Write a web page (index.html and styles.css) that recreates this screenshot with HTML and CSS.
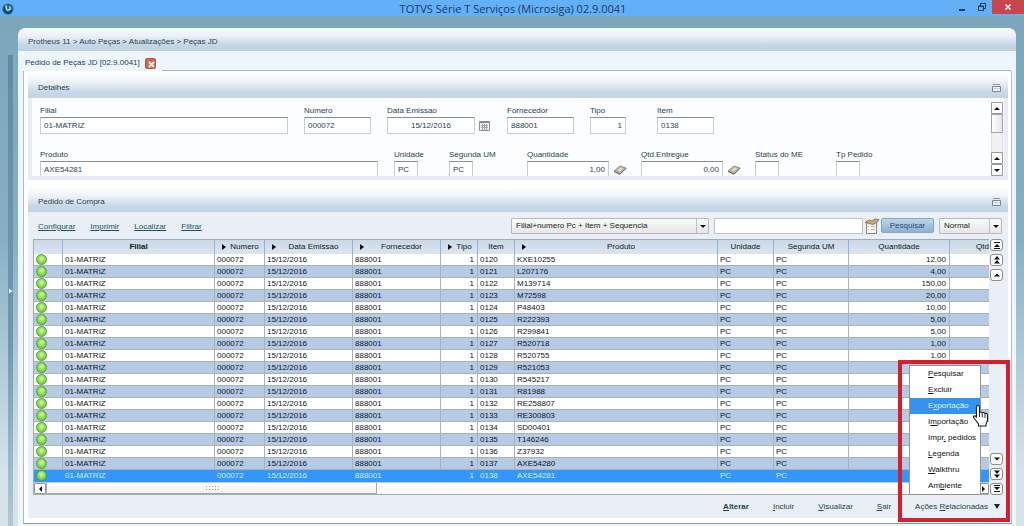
FILE: index.html
```html
<!DOCTYPE html>
<html lang="pt-BR">
<head>
<meta charset="utf-8">
<title>TOTVS Série T Serviços (Microsiga) 02.9.0041</title>
<link rel="stylesheet" href="styles.css">
</head>
<body>
<header class="titlebar">
  <svg class="app-logo" viewBox="0 0 12 12" aria-hidden="true"><circle cx="6" cy="6" r="5.6" fill="#1d6a96"/><path d="M3 3.500A4 4 0 0 0 6 10a4 4 0 0 0 3.500-3" fill="none" stroke="#0c3d5e" stroke-width="1.500"/><path d="M4 2.500 4.500 6a2 2 0 1 0 3-2.500" fill="none" stroke="#c8ecfa" stroke-width="1.300"/></svg>
  <h1 class="window-title">TOTVS Série T Serviços (Microsiga) 02.9.0041</h1>
  <div class="window-buttons">
    <button class="win-btn" aria-label="Minimizar"><svg viewBox="0 0 10 10" width="10" height="10"><path d="M2 7h6v2H2z" fill="#14395c"/></svg></button>
    <button class="win-btn" aria-label="Restaurar"><svg viewBox="0 0 10 10" width="10" height="10" fill="none" stroke="#14395c"><path d="M1.500 4h5v4.500h-5zM3.500 4V1.500h5v5h-2M1.500 4.500h5"/></svg></button>
    <button class="win-btn win-close" aria-label="Fechar"><svg viewBox="0 0 10 10" width="10" height="10"><path d="m2.500 2.500 5 5m0-5-5 5" stroke="#fff" stroke-width="1.500"/></svg></button>
  </div>
</header>
<div class="shell">
  <aside class="rail"><button class="rail-handle" aria-label="Expandir menu"><svg viewBox="0 0 4 8" width="4" height="8"><path d="M0 1.500 3.500 4 0 6.500z" fill="#fff"/></svg></button></aside>
  <main class="panel">
    <nav class="crumbs">Protheus 11 &gt; Auto Peças &gt; Atualizações &gt; Peças JD</nav>
    <div class="tabs"><span class="tab">Pedido de Peças JD [02.9.0041]
      <button class="tab-close" aria-label="Fechar aba"><svg viewBox="0 0 11 11" width="11" height="11"><path d="m3 3 5 5m0-5-5 5" stroke="#fff" stroke-width="1.800"/></svg></button></span><span class="tab-line"></span></div>
    <div class="page">
      <section class="box details">
        <div class="box-head"><h2>Detalhes</h2><svg class="fold" viewBox="0 0 9 8"><path d="M.5 2.500h8v5h-8z" fill="#eef2f6" stroke="#7b8794"/><path d="M1 .5h7" stroke="#8b96a3"/><path d="M1 4.500h7" stroke="#c9d1d9"/></svg></div>
        <div class="form-body">
          <form class="fields">
            <div class="row row-a">
              <div class="field"><label for="f1">Filial</label><input id="f1" class="w-branch" value="01-MATRIZ"></div>
              <div class="field"><label for="f2">Numero</label><input id="f2" class="w-code" value="000072"></div>
              <div class="field"><label for="f3">Data Emissao</label><div class="with-icon"><input id="f3" class="w-date" value="15/12/2016"><svg viewBox="0 0 11 11" width="11" height="11"><path d="M.5 1.500h10v9H.5z" fill="#eef0f2" stroke="#888e96"/><path d="M1 2.500h9" stroke="#7d858e"/><path d="M2 5.500h7M2 7.500h7M3.500 4v6M5.500 4v6M7.500 4v6" stroke="#9299a2" stroke-width=".8"/></svg></div></div>
              <div class="field"><label for="f4">Fornecedor</label><input id="f4" class="w-code" value="888001"></div>
              <div class="field"><label for="f5">Tipo</label><input id="f5" class="w-type num" value="1"></div>
              <div class="field"><label for="f6">Item</label><input id="f6" class="w-item" value="0138"></div>
            </div>
            <div class="row row-b">
              <div class="field"><label for="g1">Produto</label><input id="g1" class="w-product" value="AXE54281"></div>
              <div class="field"><label for="g2">Unidade</label><input id="g2" class="w-unit" value="PC"></div>
              <div class="field"><label for="g3">Segunda UM</label><input id="g3" class="w-unit" value="PC"></div>
              <div class="field"><label for="g4">Quantidade</label><div class="with-icon"><input id="g4" class="w-qty num" value="1,00"><svg viewBox="0 0 14 10" width="14" height="10"><path d="m1 6 6-5 6 2-6 6z" fill="#b9b6a4" stroke="#75725f" stroke-width=".7"/><path d="m4.500 5 3.500-2.500 2 1-3.500 2.700z" fill="#e4e1d3"/><path d="m1 6.500 6 2.800 6-6" fill="none" stroke="#656252"/></svg></div></div>
              <div class="field"><label for="g5">Qtd.Entregue</label><div class="with-icon"><input id="g5" class="w-qty num" value="0,00"><svg viewBox="0 0 14 10" width="14" height="10"><path d="m1 6 6-5 6 2-6 6z" fill="#b9b6a4" stroke="#75725f" stroke-width=".7"/><path d="m4.500 5 3.500-2.500 2 1-3.500 2.700z" fill="#e4e1d3"/><path d="m1 6.500 6 2.800 6-6" fill="none" stroke="#656252"/></svg></div></div>
              <div class="field"><label for="g6">Status do ME</label><input id="g6" class="w-unit"></div>
              <div class="field"><label for="g7">Tp Pedido</label><input id="g7" class="w-unit"></div>
            </div>
          </form>
          <div class="vscroll"><button class="step up" aria-label="Subir"></button><span class="vthumb"></span><span class="vtrack"></span><button class="step up" aria-label="Página acima"></button><button class="step down" aria-label="Descer"></button></div>
        </div>
      </section>
      <section class="box order">
        <div class="box-head"><h2>Pedido de Compra</h2><svg class="fold" viewBox="0 0 9 8"><path d="M.5 2.500h8v5h-8z" fill="#eef2f6" stroke="#7b8794"/><path d="M1 .5h7" stroke="#8b96a3"/><path d="M1 4.500h7" stroke="#c9d1d9"/></svg></div>
        <div class="order-body">
          <div class="toolbar">
            <div class="links"><a href="#">Configurar</a><a href="#">Imprimir</a><a href="#">Localizar</a><a href="#">Filtrar</a></div>
            <div class="search">
              <span class="select key"><select aria-label="Índice"><option>Filial+numero Pc + Item + Sequencia</option></select></span>
              <input class="query" aria-label="Texto da pesquisa">
              <button class="form-btn" aria-label="Parâmetros"><svg viewBox="0 0 16 16" width="16" height="16"><path d="M2.500 4.500h10v11h-10z" fill="#f5f3ee" stroke="#8c877f"/><path d="M1 4.500 5 2l3 1 3-2 4 .5-2 3-4 2-4-1z" fill="#c9a878" stroke="#85684a" stroke-width=".8"/><path d="M4.500 8v1m0 2v1M7 8.500h4M7 11.500h4" stroke="#b5b0a8"/></svg></button>
              <button class="search-btn">Pesquisar</button>
              <span class="select mode"><select aria-label="Modo"><option>Normal</option></select></span>
            </div>
          </div>
          <div class="grid-wrap">
            <div class="grid-main">
              <table class="grid">
                <colgroup><col class="c-dot"><col class="c-branch"><col class="c-num"><col class="c-date"><col class="c-date"><col class="c-small"><col class="c-small"><col><col class="c-unit"><col class="c-unit2"><col class="c-qty"><col class="c-last"></colgroup>
                <thead><tr><th></th><th class="main-key">Filial</th><th class="sort">Numero</th><th class="sort">Data Emissao</th><th class="sort">Fornecedor</th><th class="sort">Tipo</th><th>Item</th><th class="sort">Produto</th><th>Unidade</th><th>Segunda UM</th><th>Quantidade</th><th class="cut">Qtd</th></tr></thead>
                <tbody id="rows"></tbody>
              </table>
              <div class="hscroll"><button class="step left" aria-label="Esquerda"></button><span class="hthumb"><span class="grip"></span></span><span class="htrack"></span><button class="step right" aria-label="Direita"></button></div>
            </div>
            <div class="nav-col">
              <button aria-label="Primeiro"><svg viewBox="0 0 8 8"><path d="M1 1h6v1H1zM4 3l3 3H1zM1 7h6v1H1z"/></svg></button>
              <button aria-label="Página anterior"><svg viewBox="0 0 8 8"><path d="m4 0 3 3.500H1zM4 4l3 3.500H1z"/></svg></button>
              <button aria-label="Anterior"><svg viewBox="0 0 8 8"><path d="m4 2.500 3 3H1z"/></svg></button>
              <button class="push" aria-label="Próximo"><svg viewBox="0 0 8 8"><path d="m4 5.500 3-3H1z"/></svg></button>
              <button aria-label="Próxima página"><svg viewBox="0 0 8 8"><path d="m4 4 3-3.500H1zM4 8l3-3.500H1z"/></svg></button>
              <button aria-label="Último"><svg viewBox="0 0 8 8"><path d="M1 0h6v1H1zm3 5 3-3H1zM1 6h6v1H1z"/></svg></button>
            </div>
          </div>
          <footer class="actions">
            <button class="default"><u>A</u>lterar</button><button><u>I</u>ncluir</button><button><u>V</u>isualizar</button><button><u>S</u>air</button>
            <div class="related">
              <button class="related-btn"><span>Ações <u>R</u>elacionadas</span><span class="caret"></span></button>
              <div class="menu" role="menu">
                <button role="menuitem"><u>P</u>esquisar</button><button role="menuitem"><u>E</u>xcluir</button><button role="menuitem" class="active">E<u>x</u>portação</button><button role="menuitem">I<u>m</u>portação</button><button role="menuitem">Impr<u>.</u> pedidos</button><button role="menuitem"><u>L</u>egenda</button><button role="menuitem"><u>W</u>alkthru</button><button role="menuitem">Am<u>b</u>iente</button>
                <svg class="pointer" viewBox="0 0 18 24"><path d="M4.500 13V3c0-2 3-2 3 0v6c0-1.500 2.800-1.500 2.800.5 0-1.500 2.700-1.300 2.700.7 0-1.300 2.500-1.200 2.500.8v5c0 2-1.500 3-1.500 4.500V22H6.500v-2L2 14c-1.500-2 .500-3 2.500-1z" fill="#fff" stroke="#15181c" stroke-width="1.100"/><path d="M7.500 9v4m2.800-3.500v4m2.700-3.300V14" stroke="#15181c" stroke-width=".9"/></svg>
              </div>
              <span class="callout"></span>
            </div>
          </footer>
        </div>
      </section>
    </div>
  </main>
</div>
<script src="rows.js"></script>
</body>
</html>
```
FILE: rows.js
```javascript
const products = [
  ["KXE10255", "12,00"], ["L207176", "4,00"], ["M139714", "150,00"], ["M72598", "20,00"],
  ["P48403", "10,00"], ["R222393", "5,00"], ["R299841", "5,00"], ["R520718", "1,00"],
  ["R520755", "1,00"], ["R521053", "1,00"], ["R545217", ""], ["R81988", ""],
  ["RE258807", ""], ["RE300803", ""], ["SD00401", ""], ["T146246", ""],
  ["Z37932", ""], ["AXE54280", ""], ["AXE54281", ""]
];
document.getElementById("rows").innerHTML = products.map(([code, qty], i) => {
  const selected = i === products.length - 1 ? ' class="selected"' : "";
  return `<tr${selected}><td class="status"><span class="dot"></span></td><td>01-MATRIZ</td><td>000072</td><td>15/12/2016</td><td>888001</td><td class="num">1</td><td>0${120 + i}</td><td>${code}</td><td>PC</td><td>PC</td><td class="num">${qty}</td><td></td></tr>`;
}).join("");
```
FILE: styles.css
```css
* { box-sizing: border-box; }
body {
  margin: 0;
  min-height: 100vh;
  display: flex;
  flex-direction: column;
  font: 8px/12px "Liberation Sans", Arial, sans-serif;
  color: #1f4358;
  background: linear-gradient(#7ba5ba, #86afc4 45%, #d6e3eb 90%);
}
button, input, select { font: inherit; color: inherit; margin: 0; padding: 0; }
button { border: 0; background: none; cursor: pointer; }
svg { display: block; flex: none; }
h1, h2 { margin: 0; font-weight: 400; }

.titlebar {
  display: grid;
  grid-template-columns: 1fr auto 1fr;
  align-items: center;
  height: 16px;
  padding-left: 2px;
  background: #63b0f9;
}
.app-logo { width: 12px; height: 12px; }
.window-title { font: 11px/16px "Open Sans", "Noto Sans", sans-serif; color: #153c60; padding-top: 1px; }
.window-buttons { display: flex; justify-content: flex-end; align-self: start; }
.win-btn { display: grid; place-items: center; width: 20px; height: 14px; }
.win-close { width: 32px; background: #c9474c; }

.shell { flex: 1; display: flex; padding: 12px 8px 0 0; }
.rail {
  width: 18px;
  flex: none;
  display: flex;
  align-items: center;
  padding: 27px 5px 0 8px;
}
.rail-handle {
  align-self: stretch;
  width: 5px;
  display: grid;
  place-items: center;
  background: linear-gradient(#5f8ba5, #6e98b0 60%, #b3c8d4);
}
.panel {
  flex: 1;
  min-width: 0;
  display: flex;
  flex-direction: column;
  background: #edf5fd;
  border-radius: 8px 8px 0 0;
}
.crumbs {
  height: 23px;
  padding: 0 10px;
  line-height: 27px;
  border-radius: 8px 8px 0 0;
  background: linear-gradient(#f6f9fd, #eaf1f7 35%, #c4d6e4 75%, #bed2e0);
}
.tabs { display: flex; height: 20px; padding: 0 5px 0 7px; align-items: stretch; }
.tab { display: flex; align-items: center; gap: 5px; padding-top: 4px; padding-right: 6px; }
.tab-close { background: #d9654f; border: 1px solid #b6543f; border-radius: 2px; width: 11px; height: 11px; display: grid; place-items: center; }
.tab-line { flex: 1; border-bottom: 1px solid #b1b3bf; }
.page {
  flex: 1;
  margin: 0 4px 2px 5px;
  padding: 1px 3px 5px 4px;
  display: flex;
  flex-direction: column;
  gap: 6px;
  background: #fff;
  border: 1px solid #b3b9c6;
  border-top: 0;
  border-bottom-color: #8d9ba8;
}
.box-head {
  display: flex;
  align-items: center;
  justify-content: space-between;
  height: 26px;
  padding: 6px 7px 0 10px;
  background: linear-gradient(#fff, #eff4f9 35%, #c7d7e6 80%, #c1d4e4);
}
.box-head h2 { font-size: 8px; line-height: 12px; }
.fold { width: 9px; height: 8px; }
.form-body {
  display: flex;
  height: 82px;
  overflow: hidden;
  padding: 4px 1px 0 8px;
  background: #fcfdfe;
  border: solid #e9ecf5;
  border-width: 0 4px 4px;
}
.fields { flex: 1; min-width: 0; overflow: hidden; display: flex; flex-direction: column; gap: 15px; padding-top: 3px; }
.row { display: grid; flex: none; }
.row-a { grid-template-columns: 264px 83px 120px 83px 67px 57px; }
.row-b { grid-template-columns: 354px 55px 78px 114px 114px 81px 60px; }
.field label { display: block; height: 12px; line-height: 12px; white-space: nowrap; }
.field input {
  display: block;
  height: 17px;
  padding: 0 3px;
  background: #fff;
  border: 1px solid #c3cdd6;
  border-top-color: #858c92;
  border-radius: 0;
}
.with-icon { display: flex; align-items: center; gap: 4px; }
.w-branch { width: 248px; }
.w-code { width: 67px; }
.w-item { width: 57px; }
.field .w-date { width: 88px; text-align: center; }
.w-type { width: 36px; }
.w-product { width: 338px; }
.w-unit { width: 24px; }
.w-qty { width: 82px; }
.num { text-align: right; }

.vscroll { width: 12px; display: flex; flex-direction: column; background: #f1f1f3; }
.vthumb { height: 19px; border: 1px solid #a3a3a8; background: linear-gradient(90deg, #fff, #e6e5ea); }
.vtrack { flex: 1; border: solid #e0e0e5; border-width: 0 1px; }
.step { display: grid; place-items: center; width: 12px; height: 12px; border: 1px solid #96989c; border-radius: 1px; background: #fff; flex: none; }
.step::before { content: ""; border: 3px solid transparent; }
.up::before { border-top: 0; border-bottom-color: #111; }
.down::before { border-bottom: 0; border-top-color: #111; }
.left::before { border-left: 0; border-right-color: #111; }
.right::before { border-right: 0; border-left-color: #111; }

.order { flex: 1; display: flex; flex-direction: column; }
.order-body { flex: 1; display: flex; flex-direction: column; padding: 0 4px 0 5px; background: #e9eff5; }
.toolbar { display: flex; justify-content: space-between; align-items: center; height: 27px; padding: 0 2px 0 5px; }
.links { display: flex; gap: 15px; padding-top: 2px; }
.links a { color: #1b5566; }
.search { display: flex; align-items: center; }
.select { position: relative; display: flex; height: 16px; }
.select select { appearance: none; width: 100%; padding: 0 4px; border: 1px solid #b7bbc0; border-radius: 1px; background: linear-gradient(#fafafa, #e6e6e6); color: #222; }
.select::after { content: ""; position: absolute; right: 3px; top: 7px; border: 3px solid transparent; border-top-color: #111; border-bottom: 0; pointer-events: none; }
.select::before { content: ""; position: absolute; right: 12px; top: 1px; bottom: 1px; border-left: 1px solid #bcc0c4; pointer-events: none; }
.key { width: 198px; margin-right: 5px; }
.mode { width: 63px; margin-left: 5px; }
.query { width: 149px; height: 16px; border: 1px solid #b9c3cc; background: #fff; padding: 0 3px; }
.form-btn { margin: 0 1px; }
.search-btn { width: 53px; height: 15px; border: 1px solid #86a8c2; border-radius: 2px; background: linear-gradient(#bed5e8, #8db1d0); color: #1f4e74; }

.grid-wrap { flex: 1; display: flex; }
.grid-main { flex: 1; min-width: 0; display: flex; flex-direction: column; justify-content: space-between; border: 1px solid #9cacba; border-right: 0; background: #fafcfe; }
.grid { width: 100%; table-layout: fixed; border-collapse: separate; border-spacing: 0; color: #10141a; }
.c-dot { width: 29px; }
.c-branch { width: 152px; }
.c-num { width: 50px; }
.c-date { width: 88px; }
.c-small { width: 37px; }
.c-unit { width: 56px; }
.c-unit2 { width: 75px; }
.c-qty { width: 101px; }
.c-last { width: 39px; }
.grid th { position: relative; height: 14px; padding: 0 2px; font-weight: 400; border-right: 1px solid #8eb4dc; background: linear-gradient(#cbd8e6, #dbe5ef); white-space: nowrap; overflow: hidden; }
.grid .main-key { font-weight: 700; }
.grid .sort { padding-left: 12px; }
.sort::before { content: ""; position: absolute; left: 7px; top: 4px; border: 3px solid transparent; border-left: 4px solid #000; border-right: 0; }
.grid .cut { text-align: right; padding: 0; border: 0; }
.grid td { height: 12px; line-height: 11px; padding: 0 3px 0 2px; border-right: 1px solid #a9b2bc; border-bottom: 1px solid #a9b2bc; white-space: nowrap; background: #fff; }
.grid tr:nth-child(even) td { background: #b5cae5; }
.grid .selected td { background: #3396fb; color: #cdf3ff; border-color: #3396fb; }
.grid td:last-child { border-right: 0; }
.grid .status { padding: 0 2px; }
.dot { display: block; width: 11px; height: 11px; border-radius: 50%; border: 1px solid #4fa03a; background: radial-gradient(circle at 50% 40%, #c4f58d 0 15%, #86dd4e 50%, #66bf3d); }
.hscroll { display: flex; height: 12px; background: #fbfaf9; border-top: 1px solid #c6c9cd; }
.hscroll .step { height: 11px; }
.hthumb { width: 331px; display: grid; place-items: center; border: 1px solid #a8a8ac; border-top: 0; background: linear-gradient(#fff, #f3efec); }
.grip { width: 14px; height: 7px; background: radial-gradient(#9a9a9a 25%, transparent 30%) 0 0 / 3px 3px; }
.htrack { flex: 1; }
.nav-col { display: flex; flex-direction: column; gap: 3px; width: 15px; }
.nav-col button { display: grid; place-items: center; width: 13px; height: 12px; margin-left: 1px; border: 1px solid #8d8d92; border-radius: 3px; background: #fafafa; }
.nav-col .push { margin-top: auto; }
.nav-col svg { width: 8px; height: 8px; fill: #111; }

.actions { display: flex; justify-content: flex-end; align-items: center; height: 23px; padding-right: 4px; white-space: nowrap; }
.actions > button { margin-right: 24px; }
.default { font-weight: 700; }
.related { position: relative; }
.related-btn { display: flex; align-items: center; gap: 6px; }
.caret { border: 3px solid transparent; border-top: 5px solid #222; border-bottom: 0; }
.menu { position: absolute; z-index: 1; bottom: 18px; left: -6px; width: 72px; background: #fff; border: 1px solid #8f9499; }
.menu button { display: block; width: 100%; height: 16px; padding-left: 18px; text-align: left; color: #111; }
.menu .active { background: #3393ee; color: #dff3ff; }
.pointer { position: absolute; left: 62px; top: 38px; width: 18px; height: 24px; }
.callout { position: absolute; z-index: 2; inset: -141px -10px -9px -17px; border: 4px solid #d4202e; pointer-events: none; }
```
